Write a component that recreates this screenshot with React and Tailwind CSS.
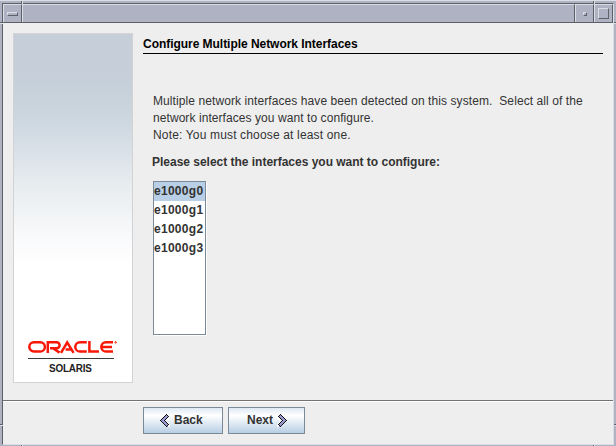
import React from "react";

const interfaces = ["e1000g0", "e1000g1", "e1000g2", "e1000g3"];

function TitleBar() {
  return (
    <div className="flex h-[19px] shrink-0 border-b border-[#5d6069]">
      <div className="flex w-[19px] items-center justify-center border-t border-r border-l border-t-[#dcdee5] border-l-[#dcdee5] border-r-[#5d6069]">
        <div className="h-[4px] w-[11px] border border-t-[#dcdee5] border-l-[#dcdee5] border-r-[#5d6069] border-b-[#5d6069]" />
      </div>
      <div className="flex-1 border-t border-r border-l border-t-[#dcdee5] border-l-[#dcdee5] border-r-[#5d6069]" />
      <div className="flex w-[19px] items-center justify-center border-t border-r border-l border-t-[#dcdee5] border-l-[#dcdee5] border-r-[#5d6069]">
        <div className="h-[4px] w-[4px] border border-t-[#dcdee5] border-l-[#dcdee5] border-r-[#5d6069] border-b-[#5d6069]" />
      </div>
      <div className="flex w-[19px] items-center justify-center border-t border-r border-l border-t-[#dcdee5] border-l-[#dcdee5] border-r-[#5d6069]">
        <div className="h-[11px] w-[11px] border border-t-[#dcdee5] border-l-[#dcdee5] border-r-[#5d6069] border-b-[#5d6069]" />
      </div>
    </div>
  );
}

function FrameMarks() {
  return (
    <svg className="pointer-events-none absolute -top-px left-0" width="616" height="446" shapeRendering="crispEdges">
      <path fill="#5d6069" d="M21 0h1v3h-1zM593 0h1v3h-1zM21 445h1v1h-1zM593 445h1v1h-1zM0 22h2v1h-2zM0 424h2v1h-2zM614 22h2v1h-2zM614 424h2v1h-2z" />
      <path fill="#dcdee5" d="M22 0h1v4h-1zM594 0h1v4h-1zM22 445h1v1h-1zM594 445h1v1h-1zM0 23h3v1h-3zM0 425h3v1h-3zM614 23h2v1h-2zM614 425h2v1h-2z" />
    </svg>
  );
}

function OracleLogo() {
  return (
    <svg width="92" height="14" viewBox="0 0 92 14" fill="none" stroke="#f81808" strokeWidth="2.5">
      <path d="M6 2.2H12.2A4.6 4.6 0 0 1 12.2 11.6H6A4.6 4.6 0 0 1 6 2.2Z" />
      <path d="M19.8 13V2.2H28.6A2.8 2.8 0 0 1 28.6 8.2H22M25 8.2L31.6 12.6" />
      <path d="M33 12.8L39.2 2.4L45.6 12.8M37.6 9.6H43.6" />
      <path d="M58.8 2.2H52A4.6 4.6 0 0 0 52 11.6H58.8" />
      <path d="M61.4 1V11.6H71" />
      <path d="M85 2.2H78A4.6 4.6 0 0 0 78 11.6H85M73.8 6.9H84" />
      <circle cx="87.6" cy="2.4" r=".8" strokeWidth="1" />
    </svg>
  );
}

function Chevron({ flip }) {
  return (
    <svg width="10" height="14" viewBox="0 0 10 14" shapeRendering="crispEdges" className={flip ? "-scale-x-100" : ""}>
      <path fill="#fff" d="M7 2h3v3h-1v1h-1v1h-1v1h1v1h1v1h1v3h-3z" />
      <path fill="#9999d0" d="M6 1h2v2h-1v1h-1v1h-1v1h-1v2h1v1h1v1h1v1h1v2h-2v-2h-1v-1h-1v-1h-1v-1h-1v-2h1v-1h1v-1h1v-1h1z" />
      <path fill="#9999d0" d="M4 3h3v1h-3zM3 4h3v1h-3zM2 5h3v1h-3zM1 6h3v1h-3zM2 7h3v1h-3zM3 8h3v1h-3zM4 9h3v1h-3zM5 10h3v1h-3zM5 2h3v1h-3z" />
      <path fill="#111" d="M6 0h1v1h-1zM5 1h1v1h-1zM4 2h1v1h-1zM3 3h1v1h-1zM2 4h1v1h-1zM1 5h1v1h-1zM0 6h1v1h-1zM1 7h1v1h-1zM2 8h1v1h-1zM3 9h1v1h-1zM4 10h1v1h-1zM5 11h1v1h-1zM6 12h1v1h-1zM7 1h1v1h-1zM8 2h1v1h-1zM7 3h1v1h-1zM6 4h1v1h-1zM5 5h1v1h-1zM4 6h1v1h-1zM5 7h1v1h-1zM6 8h1v1h-1zM7 9h1v1h-1zM8 10h1v1h-1zM7 11h1v1h-1z" />
    </svg>
  );
}

const buttonClass =
  "flex h-[27px] items-center border border-[#7a8a99] bg-linear-to-b from-[#dfe9f4] via-white via-30% to-[#b8cfe5] text-[12px] font-bold text-[#333]";

export default function App() {
  return (
    <div className="relative h-[446px] w-[616px] overflow-hidden border-t border-t-[#dcdee5] bg-[#aeb2c3] pt-[2px] pr-[2px] pb-px pl-[2px] font-['Liberation_Sans',Arial,sans-serif]">
      <div className="flex h-[442px] flex-col border-t border-r border-b border-l border-t-[#5d6069] border-r-[#dcdee5] border-b-[#dcdee5] border-l-[#5d6069]">
        <TitleBar />
        <div className="flex h-[377px] bg-[#eee] pt-[10px] pl-[10px]">
          <aside className="flex h-[350px] w-[120px] flex-col items-start border border-[#d3d3d3] bg-[linear-gradient(#c5ced9_0px,#c5ced9_35px,#c9d4dc_75px,#dae1e9_120px,#e7ecee_150px,#f8f9fb_200px,#fff_230px)] pt-[306px] pl-[14px]">
            <OracleLogo />
            <div className="mt-[4px] h-px w-[86px] bg-[#3b3b40]" />
            <div className="mt-px ml-[21px] origin-left scale-x-[0.9] text-[11px] leading-[16px] font-bold tracking-[-0.2px] text-[#222]">SOLARIS</div>
          </aside>
          <main className="ml-[10px] w-[460px] text-[12px] text-[#333]">
            <h1 className="h-[21px] border-b border-black pt-[4px] leading-[15px] font-bold tracking-[-0.04px] whitespace-nowrap text-black">Configure Multiple Network Interfaces</h1>
            <div className="mt-[39px] pl-[10px] leading-[17px] whitespace-pre">
              <p className="tracking-[0.085px]">Multiple network interfaces have been detected on this system.  Select all of the</p>
              <p className="tracking-[0.07px]">network interfaces you want to configure.</p>
              <p className="tracking-[0.16px]">Note: You must choose at least one.</p>
            </div>
            <h2 className="mt-[10px] pl-[9px] leading-[17px] font-bold tracking-[-0.015px] whitespace-nowrap">Please select the interfaces you want to configure:</h2>
            <ul className="mt-[10px] ml-[10px] h-[154px] w-[53px] border border-[#7a8a99] bg-white font-bold tracking-[0.28px] shadow-[1px_1px_0_#fff]">
              {interfaces.map((name, index) => (
                <li key={name} className={`h-[19px] leading-[19px] ${index === 0 ? "bg-[#b8cfe5]" : ""}`}>
                  {name}
                </li>
              ))}
            </ul>
          </main>
        </div>
        <footer className="flex flex-1 gap-[5px] border-t border-[#737373] bg-[#eee] pl-[140px] shadow-[inset_0_1px_0_#fff]">
          <button className={`${buttonClass} mt-[6px] w-[80px] gap-[4px] pl-[16px]`}>
            <Chevron />
            <span className="pb-[2px]">Back</span>
          </button>
          <button className={`${buttonClass} mt-[6px] w-[77px] gap-[4px] pl-[18px]`}>
            <span className="pb-[2px]">Next</span>
            <Chevron flip />
          </button>
        </footer>
      </div>
      <FrameMarks />
    </div>
  );
}
